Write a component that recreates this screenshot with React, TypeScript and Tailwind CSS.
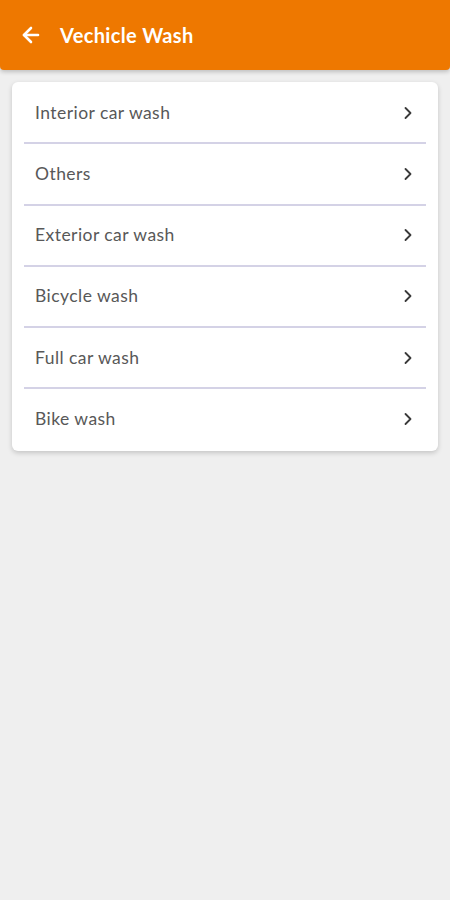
import { ArrowLeft, ChevronRight } from "lucide-react"

const ITEMS = [
  "Interior car wash",
  "Others",
  "Exterior car wash",
  "Bicycle wash",
  "Full car wash",
  "Bike wash",
]

export default function App() {
  return (
    <div className="min-h-[900px] bg-[#efefef] font-['Lato','Noto_Sans',sans-serif]">
      {/* Header */}
      <div className="h-[70px] bg-[#ee7800] rounded-b-[4px] shadow-[0_2px_4px_rgba(0,0,0,0.2)] flex items-center pl-[19px]">
        <ArrowLeft size={24} strokeWidth={2.6} className="text-white" />
        <h1 className="ml-[17px] text-[20px] font-bold text-white tracking-[0.35px]">Vechicle Wash</h1>
      </div>

      {/* List */}
      <div className="mx-3 mt-3 pt-[1px] pb-[2px] bg-white rounded-[6px] shadow-[0_2px_5px_rgba(0,0,0,0.18)]">
        {ITEMS.map((item, i) => (
          <div key={item}>
            {i > 0 && <div className="mx-3 h-[2px] bg-[#d4d2e6]" />}
            <div className="h-[59.25px] flex items-center justify-between pl-[23px] pr-[20px]">
              <span className="text-[17.5px] text-[#585858] tracking-[0.45px]">{item}</span>
              <ChevronRight size={20} strokeWidth={2.2} className="text-[#3a3a3a]" />
            </div>
          </div>
        ))}
      </div>
    </div>
  )
}
